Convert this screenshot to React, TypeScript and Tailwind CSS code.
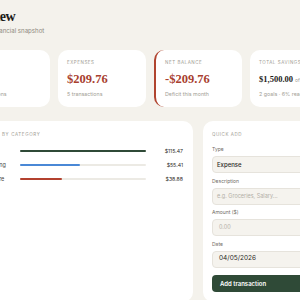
import React from "react";

const serif = "font-['Liberation_Serif',serif]";

function StatCard({
  label,
  value,
  sub,
  valueClass,
  extra,
  accent,
}: {
  label: string;
  value: string;
  sub: string;
  valueClass: string;
  extra?: string;
  accent?: boolean;
}) {
  return (
    <div
      className={
        "bg-white rounded-[10px] h-[57px] pl-[9px] pr-[9px] pt-[10px] " +
        (accent ? "border-l-2 border-[#b0442f]" : "")
      }
    >
      <div className="text-[4.5px] leading-[5px] tracking-[0.12em] uppercase text-[#a29e95]">{label}</div>
      <div className="mt-[7px] h-[15px] flex items-baseline gap-[2px] whitespace-nowrap">
        <span className={serif + " font-bold leading-[15px] " + valueClass}>{value}</span>
        {extra ? <span className="text-[5px] text-[#a29e95]">{extra}</span> : null}
      </div>
      <div className="mt-[4.5px] text-[5.3px] leading-[7px] text-[#a29e95] whitespace-nowrap">{sub}</div>
    </div>
  );
}

const cats = [
  { name: "Food", amount: 115.47, color: "bg-[#2f4a37]" },
  { name: "Shopping", amount: 55.41, color: "bg-[#4a88d6]" },
  { name: "Software", amount: 38.88, color: "bg-[#b3412f]" },
];

function Field({ label, children }: { label: string; children: React.ReactNode }) {
  return (
    <div className="flex flex-col">
      <div className="text-[5px] leading-[6px] text-[#6f6b63]">{label}</div>
      <div className="mt-[4px]">{children}</div>
    </div>
  );
}

export default function App() {
  const max = 115.47;
  return (
    <div className="min-h-screen w-full overflow-hidden bg-[#f4f2ec] flex justify-center font-['Inter',sans-serif] text-[#1f1e1b]">
      <div className="w-[376px] shrink-0 pt-[7.5px]">
        <h1 className={serif + " font-bold text-[14px] leading-[17px] tracking-[-0.04em] text-[#1c1b18]"}>Overview</h1>
        <p className="mt-[2.5px] text-[6.1px] leading-[8px] text-[#8d897f]">Your April financial snapshot</p>

        <div className="grid grid-cols-4 gap-[8px] mt-[14.5px]">
          <StatCard label="Income" value="$0.00" sub="0 transactions" valueClass="text-[12.5px] text-[#2f4a37]" />
          <StatCard label="Expenses" value="$209.76" sub="5 transactions" valueClass="text-[12.5px] text-[#a8402f]" />
          <StatCard
            label="Net balance"
            value="-$209.76"
            sub="Deficit this month"
            valueClass="text-[12.5px] text-[#a8402f]"
            accent
          />
          <StatCard
            label="Total savings"
            value="$1,500.00"
            extra="of $25,000"
            sub="2 goals · 6% reached"
            valueClass="text-[8.5px] text-[#1c1b18]"
          />
        </div>

        <div className="grid grid-cols-[1fr_135px] gap-[10px] mt-[14.5px]">
          <div className="bg-white rounded-[10px] pt-[11px] px-[10px]">
            <div className="text-[4.5px] leading-[5px] tracking-[0.14em] uppercase text-[#a29e95]">Spending by category</div>
            <div className="mt-[10px] flex flex-col gap-[6px]">
              {cats.map((c) => (
                <div key={c.name} className="h-[8px] flex items-center">
                  <div className="w-[40px] shrink-0 flex items-center gap-[4px]">
                    <span className={"w-[5px] h-[5px] rounded-full " + c.color} />
                    <span className="text-[5.5px] leading-[7px] text-[#4a4741]">{c.name}</span>
                  </div>
                  <div className="ml-[8px] flex-1 h-[2px] rounded-full bg-[#eceae4]">
                    <div className={"h-[2px] rounded-full " + c.color} style={{ width: `${(c.amount / max) * 100}%` }} />
                  </div>
                  <div className="ml-[9px] w-[28px] shrink-0 text-right text-[5.2px] leading-[7px] text-[#2b2a26]">
                    ${c.amount.toFixed(2)}
                  </div>
                </div>
              ))}
            </div>
          </div>

          <div className="bg-white rounded-[10px] pt-[11px] px-[9px] pb-[10px]">
            <div className="text-[4.5px] leading-[5px] tracking-[0.12em] uppercase text-[#a29e95]">Quick add</div>
            <div className="mt-[9px] flex flex-col gap-[4.5px]">
              <Field label="Type">
                <div className="h-[17px] rounded-[4px] bg-[#f5f3ee] border border-[#e6e3dc] flex items-center px-[4px] text-[6px] font-medium text-[#2b2a26]">
                  Expense
                </div>
              </Field>
              <Field label="Description">
                <div className="h-[17px] rounded-[4px] bg-[#f5f3ee] border border-[#e6e3dc] flex items-center px-[4px] text-[5.5px] text-[#b3afa6]">
                  e.g. Groceries, Salary...
                </div>
              </Field>
              <Field label="Amount ($)">
                <div className="h-[17px] rounded-[4px] bg-[#f5f3ee] border border-[#e6e3dc] flex items-center px-[6px] text-[5.5px] text-[#b3afa6]">
                  0.00
                </div>
              </Field>
              <Field label="Date">
                <div className="h-[17px] rounded-[4px] bg-[#f5f3ee] border border-[#e6e3dc] flex items-center px-[6px] text-[6.5px] text-[#2b2a26]">
                  04/05/2026
                </div>
              </Field>
            </div>
            <button className="mt-[5.5px] w-full h-[17px] rounded-[4px] bg-[#2f4a37] text-white text-[6px] font-semibold text-left px-[8px]">
              Add transaction
            </button>
          </div>
        </div>
      </div>
    </div>
  );
}
